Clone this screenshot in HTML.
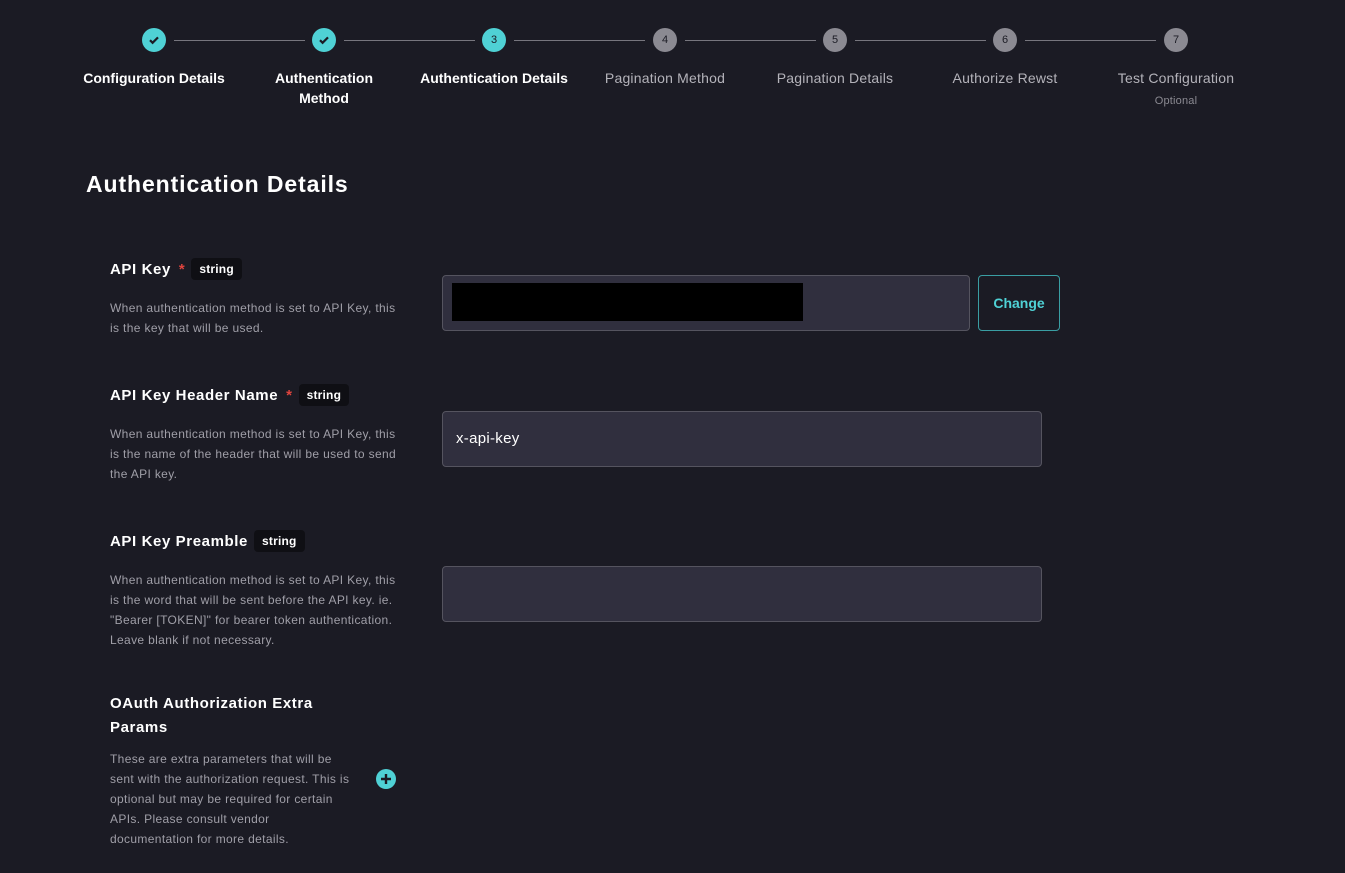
<!DOCTYPE html>
<html><head><meta charset="utf-8"><style>
*{margin:0;padding:0;box-sizing:border-box}
body{width:1345px;height:873px;background:#1b1b24;font-family:"Liberation Sans",sans-serif;color:#fff;position:relative;overflow:hidden}
.a{position:absolute}
.c{position:absolute;width:24px;height:24px;border-radius:50%;top:28px;display:flex;align-items:center;justify-content:center;font-size:11px}
.done{background:#4fd1d5;color:#1b1b24}
.todo{background:#8b8a92;color:#1b1b24}
.ln{position:absolute;top:40px;height:1px;background:#77767e}
.lb{position:absolute;top:68px;width:170px;text-align:center;font-size:14px;line-height:20px}
.w{color:#fff;font-weight:bold}
.g{color:#b4b3ba;letter-spacing:.2px}
.t{font-size:15px;font-weight:bold;line-height:24px;letter-spacing:.6px}
.tag{display:inline-block;background:#0f0f14;border-radius:4px;font-size:12px;font-weight:bold;padding:0 8px;line-height:22px;margin-left:6px;vertical-align:1px;letter-spacing:.2px}
.st{color:#e0443e;margin-left:8px}
.d{font-size:12px;color:#a09fa8;line-height:20px;letter-spacing:.35px}
.in{position:absolute;background:#302f3e;border:1px solid #55545f;border-radius:4px}
</style></head><body>
<div class="ln" style="left:174px;width:131px"></div>
<div class="ln" style="left:344px;width:131px"></div>
<div class="ln" style="left:514px;width:131px"></div>
<div class="ln" style="left:685px;width:131px"></div>
<div class="ln" style="left:855px;width:131px"></div>
<div class="ln" style="left:1025px;width:131px"></div>
<div class="c done" style="left:142px"><svg width="14" height="14" viewBox="0 0 14 14"><path d="M3 7.2l2.6 2.6L11 4.4" stroke="#1b1b24" stroke-width="2.2" fill="none"/></svg></div>
<div class="c done" style="left:312px"><svg width="14" height="14" viewBox="0 0 14 14"><path d="M3 7.2l2.6 2.6L11 4.4" stroke="#1b1b24" stroke-width="2.2" fill="none"/></svg></div>
<div class="c done" style="left:482px">3</div>
<div class="c todo" style="left:653px">4</div>
<div class="c todo" style="left:823px">5</div>
<div class="c todo" style="left:993px">6</div>
<div class="c todo" style="left:1164px">7</div>
<div class="lb w" style="left:69px">Configuration Details</div>
<div class="lb w" style="left:239px">Authentication<br>Method</div>
<div class="lb w" style="left:409px">Authentication Details</div>
<div class="lb g" style="left:580px">Pagination Method</div>
<div class="lb g" style="left:750px">Pagination Details</div>
<div class="lb g" style="left:920px">Authorize Rewst</div>
<div class="lb g" style="left:1091px">Test Configuration<div style="font-size:11px;color:#8b8a92;line-height:26px">Optional</div></div>

<div class="a" style="left:86px;top:168px;font-size:23px;line-height:32px;letter-spacing:.9px;font-weight:bold">Authentication Details</div>

<div class="a" style="left:110px;top:258px;width:305px">
<div class="t">API Key<span class="st">*</span><span class="tag">string</span></div>
<div class="d" style="margin-top:16px;width:290px">When authentication method is set to API Key, this is the key that will be used.</div></div>
<div class="in" style="left:442px;top:275px;width:528px;height:56px"><div style="position:absolute;left:9px;top:7px;width:351px;height:38px;background:#000"></div></div>
<div class="a" style="left:978px;top:275px;width:82px;height:56px;border:1px solid #3a9ea3;border-radius:4px;color:#4fd1d5;font-size:14px;font-weight:bold;display:flex;align-items:center;justify-content:center">Change</div>

<div class="a" style="left:110px;top:384px;width:305px">
<div class="t">API Key Header Name<span class="st">*</span><span class="tag">string</span></div>
<div class="d" style="margin-top:16px;width:290px">When authentication method is set to API Key, this is the name of the header that will be used to send the API key.</div></div>
<div class="in" style="left:442px;top:411px;width:600px;height:56px;font-size:15px;padding:18px 13px;letter-spacing:.3px">x-api-key</div>

<div class="a" style="left:110px;top:530px;width:305px">
<div class="t">API Key Preamble<span class="tag">string</span></div>
<div class="d" style="margin-top:16px;width:290px">When authentication method is set to API Key, this is the word that will be sent before the API key. ie. "Bearer [TOKEN]" for bearer token authentication. Leave blank if not necessary.</div></div>
<div class="in" style="left:442px;top:566px;width:600px;height:56px"></div>

<div class="a" style="left:110px;top:692px;width:250px">
<div class="t">OAuth Authorization Extra Params</div>
<div class="d" style="margin-top:9px;width:240px">These are extra parameters that will be sent with the authorization request. This is optional but may be required for certain APIs. Please consult vendor documentation for more details.</div></div>
<div class="a" style="left:376px;top:769px;width:20px;height:20px;border-radius:50%;background:#4fd1d5"><svg width="20" height="20"><path d="M10 5v10M5 10h10" stroke="#1b1b24" stroke-width="2.4"/></svg></div>
</body></html>
